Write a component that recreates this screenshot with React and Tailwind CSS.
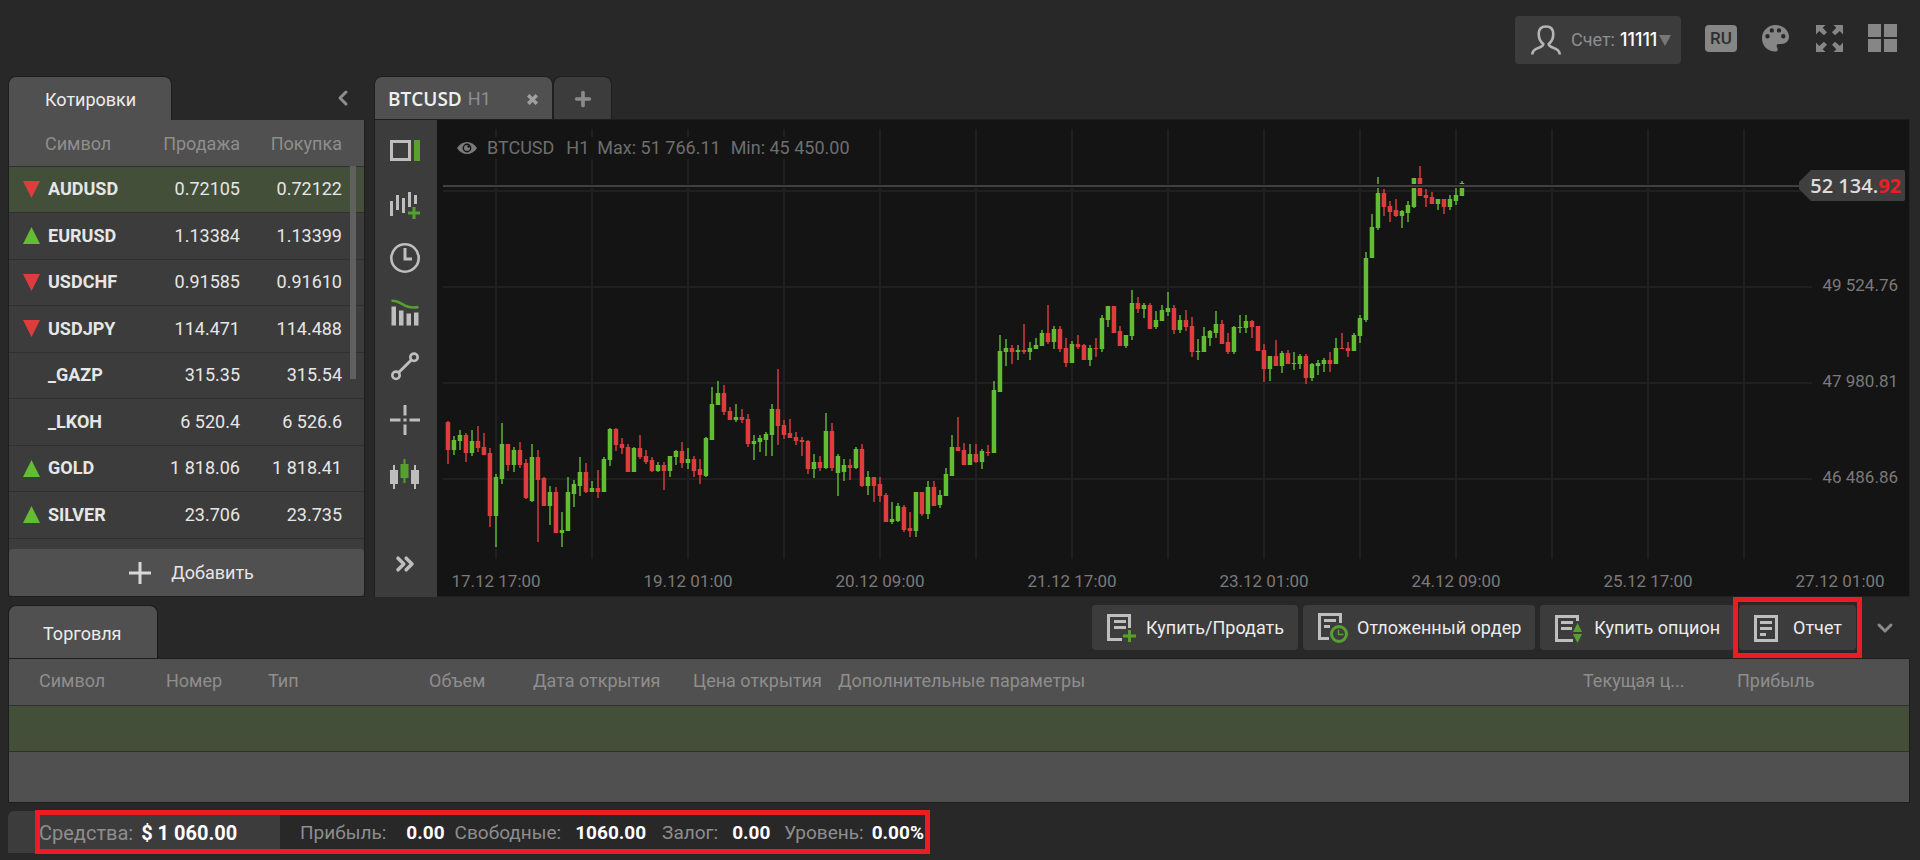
import { ChevronDown, ChevronLeft, ChevronsRight, Plus } from "lucide-react";

const quotes = [
  { symbol: "AUDUSD", bid: "0.72105", ask: "0.72122", trend: "down" },
  { symbol: "EURUSD", bid: "1.13384", ask: "1.13399", trend: "up" },
  { symbol: "USDCHF", bid: "0.91585", ask: "0.91610", trend: "down" },
  { symbol: "USDJPY", bid: "114.471", ask: "114.488", trend: "down" },
  { symbol: "_GAZP", bid: "315.35", ask: "315.54" },
  { symbol: "_LKOH", bid: "6 520.4", ask: "6 526.6" },
  { symbol: "GOLD", bid: "1 818.06", ask: "1 818.41", trend: "up" },
  { symbol: "SILVER", bid: "23.706", ask: "23.735", trend: "up" },
];

// direction, then high / body top / body bottom / low as plot heights
const candles = `
d311,312,340,354 u326,330,340,345 u320,325,331,340 d323,325,343,352 u320,331,343,346
d316,331,338,342 d323,337,345,345 d338,343,406,417 u364,367,406,437 u313,334,369,374
d334,334,355,361 u337,340,355,362 d332,340,355,358 d349,353,388,389 u334,347,391,392
d340,347,370,432 d367,368,396,396 u376,382,396,415 d377,382,423,423 u402,420,423,437
u367,382,421,421 u370,374,384,397 u347,362,376,386 d353,362,382,383 u371,378,382,382
d360,378,382,388 u347,349,382,382 u318,319,350,356 d318,319,335,341 d328,334,338,344
d334,337,362,362 u337,338,362,362 d325,338,347,349 d340,346,352,354 d347,350,361,362
u352,355,361,362 d352,355,361,380 u346,346,361,367 u340,341,347,355 d332,341,353,358
u338,349,353,359 d346,349,361,367 d349,359,365,374 u327,328,366,367 u277,294,330,330
u271,283,295,295 d275,283,302,305 d297,301,310,310 u294,307,310,312 d299,307,310,313
d304,309,334,337 u325,331,334,350 u325,328,332,342 u322,324,330,346 u294,299,325,346
d259,299,316,335 d310,315,325,329 d309,323,328,328 d322,327,331,335 d327,330,332,346
d330,331,359,364 u344,352,359,368 d346,352,358,361 u303,321,358,359 d313,321,358,361
u344,346,363,386 u349,355,362,371 d349,355,358,370 u337,339,358,359 d334,339,376,377
u361,367,376,385 d367,367,376,392 d367,374,386,392 d383,385,412,412 u392,409,412,414
u393,396,411,412 d395,397,420,422 d402,418,421,427 u382,382,421,427 d382,382,404,406
u371,377,404,409 d371,377,396,396 u380,385,395,398 u358,364,386,386 u325,337,366,366
d307,337,341,341 d333,340,355,355 u334,344,355,355 d334,344,352,353 u339,341,352,359
d335,342,343,346 u271,280,343,343 u225,241,282,282 u229,238,242,256 d235,238,242,254
u235,240,242,250 d214,240,242,244 u232,238,242,250 u228,235,239,239 u220,223,236,236
d195,223,232,234 u216,219,232,239 d216,219,239,242 d228,238,253,257 u231,234,253,253
d225,234,237,239 d234,235,250,250 u235,238,250,256 d228,238,239,247 u205,208,239,242
u196,196,210,217 d196,196,223,223 d216,221,236,236 u225,225,236,238 u180,193,226,230
d187,193,199,203 u193,195,199,208 d193,195,219,219 u201,210,217,219 u195,200,211,211
u182,198,202,206 d195,198,220,224 u205,210,220,223 d200,210,217,221 d207,216,242,247
u229,241,242,250 u217,226,242,242 u220,221,228,236 u201,214,223,228 d210,214,234,234
d223,232,242,244 u216,217,242,244 u205,217,218,223 u205,211,218,223 d210,211,217,228
d216,216,241,241 d234,240,259,272 u246,246,259,271 d230,246,256,256 u241,243,256,263
d240,243,254,254 u242,253,254,260 u244,246,254,259 d244,246,268,274 u253,254,268,271
u250,253,256,265 u248,250,254,262 d242,250,254,262 u228,238,254,254 d223,238,239,239
d232,238,241,247 u223,225,241,241 u205,208,226,233 u142,148,210,212 u104,117,148,148
u67,83,118,120 d79,83,97,106 d91,96,102,112 d89,100,106,107 u100,101,106,118
u91,95,103,112 u68,68,97,98 d56,68,86,86 d79,85,88,97 d82,87,94,94
u89,89,94,100 d89,89,97,104 u85,89,97,100 u77,85,91,95 u71,73,86,86
`
  .trim()
  .split(/\s+/)
  .map((item) => {
    const [high, top, bottom, low] = item.slice(1).split(",").map(Number);
    return { up: item[0] === "u", high, top, bottom, low };
  });

const dates = [
  "17.12 17:00",
  "19.12 01:00",
  "20.12 09:00",
  "21.12 17:00",
  "23.12 01:00",
  "24.12 09:00",
  "25.12 17:00",
  "27.12 01:00",
];

const prices = [
  { label: "49 524.76", y: 165 },
  { label: "47 980.81", y: 261 },
  { label: "46 486.86", y: 357 },
];

const tradeColumns = [
  { title: "Символ", width: "w-[157px]" },
  { title: "Номер", width: "w-[102px]" },
  { title: "Тип", width: "w-[161px]" },
  { title: "Объем", width: "w-[104px]" },
  { title: "Дата открытия", width: "w-[160px]" },
  { title: "Цена открытия", width: "w-[145px]" },
  { title: "Дополнительные параметры", width: "" },
  { title: "Текущая ц...", width: "w-[154px]" },
  { title: "Прибыль", width: "w-[172px]" },
];

function TrendIcon({ trend }) {
  if (!trend) return null;
  return (
    <svg width="17" height="17" className={trend === "up" ? "fill-[#62bd32]" : "fill-[#df3d3d]"}>
      <path d={trend === "up" ? "M8.5 0 17 17H0z" : "M0 0h17L8.500 17z"} />
    </svg>
  );
}

function Header() {
  return (
    <header className="flex items-start justify-end pt-4 pr-[23px] pb-3">
      <button className="flex h-12 w-[166px] items-center rounded-sm bg-[#3c3c3c] pl-4 text-lg">
        <svg width="30" height="30" fill="none" stroke="#b4b4b4" strokeWidth="2.600">
          <path d="M1.300 29.500c0-8 11-5.500 11-10.500C6.500 14.500 5 1.500 15 1.500S23.500 14.500 17.700 19c0 5 11 2.500 11 10.500" />
        </svg>
        <span className="ml-2.5 text-[#8e8e8e]">Счет:</span>
        <span className="ml-[5px] font-[Inter,sans-serif] font-medium text-white">11111</span>
        <svg width="12" height="11" className="ml-0.5 fill-[#777]">
          <path d="M0 0h12L6 11z" />
        </svg>
      </button>
      <button className="mt-[9px] ml-6 h-[27px] w-8 rounded-sm bg-[#868686] text-[17px] leading-[27px] font-medium text-[#2e2e2e]">
        RU
      </button>
      <button aria-label="Тема" className="mt-[9px] ml-[25px]">
        <svg width="27" height="27" fill="#868686">
          <path
            fillRule="evenodd"
            d="M13.500 0C21 0 27 5.200 27 11.800 27 16 23.500 19 19.500 19h-2.700c-1.800 0-2.800 1.500-1.800 3.200 1.500 2 .5 4.300-1.700 4.300C5.500 26.500 0 20.500 0 13.200 0 6 6 0 13.500 0zM5.500 9a2.200 2.200 0 1 0 0 4.400 2.200 2.200 0 0 0 0-4.400zM9.800 3.200a2.200 2.200 0 1 0 0 4.400 2.200 2.200 0 0 0 0-4.400zM17 3.200a2.200 2.200 0 1 0 0 4.400 2.200 2.200 0 0 0 0-4.400zM21.300 9a2.200 2.200 0 1 0 0 4.400 2.200 2.200 0 0 0 0-4.400z"
          />
        </svg>
      </button>
      <button aria-label="На весь экран" className="mt-[9px] ml-[27px]">
        <svg width="27" height="27" fill="#868686">
          <path d="M0 0h9.500L6.700 2.800 11 7.200 8 10.200 3.200 6 0 9.500zM27 0v9.500L23.800 6 19 10.200l-3-3 4.300-4.400L17.500 0zM0 27v-9.500L3.200 21 8 16.800l3 3-4.300 4.400L9.500 27zM27 27h-9.500l2.800-2.800L16 19.800l3-3 4.800 4.200 3.200-3.500z" />
        </svg>
      </button>
      <button aria-label="Окна" className="mt-2 ml-[25px]">
        <svg width="29" height="28" fill="#868686">
          <path d="M0 0h13v13H0zM16 0h13v13H16zM0 15h13v13H0zM16 15h13v13H16z" />
        </svg>
      </button>
    </header>
  );
}

function Quotes() {
  return (
    <section className="flex w-[357px] shrink-0 flex-col">
      <div className="flex h-11 items-center justify-between">
        <h2 className="flex h-full w-[164px] items-center rounded-t-lg border border-b-0 border-[#1e1e1e] bg-[#505050] pt-0.5 pl-9 text-lg text-[#ececec]">
          Котировки
        </h2>
        <button aria-label="Свернуть" className="mr-2.5 text-[#8e8e8e]">
          <ChevronLeft className="size-6" strokeWidth={3} />
        </button>
      </div>
      <div className="relative flex grow flex-col border border-t-0 border-[#1e1e1e] bg-[#3c3c3c]">
        <table className="w-full table-fixed text-lg text-[#e6e6e6]">
          <thead>
            <tr className="h-[46px] border-b border-[#303030] bg-[#505050] text-[#8e8e8e]">
              <th className="w-[134px] pt-0.5 pl-9 text-left font-normal">Символ</th>
              <th className="pt-0.5 text-right font-normal">Продажа</th>
              <th className="w-[124px] pt-0.5 pr-[22px] text-right font-normal">Покупка</th>
            </tr>
          </thead>
          <tbody>
            {quotes.map((quote) => (
              <tr
                key={quote.symbol}
                className="h-[46px] border-b border-[#303030] first:bg-[#434f39] even:h-[47px]"
              >
                <td className="font-bold">
                  <div className="flex items-center pl-3.5">
                    <span className="w-[25px]">
                      <TrendIcon trend={quote.trend} />
                    </span>
                    {quote.symbol}
                  </div>
                </td>
                <td className="text-right">{quote.bid}</td>
                <td className="pr-[22px] text-right">{quote.ask}</td>
              </tr>
            ))}
          </tbody>
        </table>
        <div className="absolute top-[46px] right-2 h-[213px] w-1.5 bg-[#606060]" />
        <button className="mt-auto flex h-[47px] items-center justify-center rounded-sm bg-[#505050] pl-2.5 text-lg text-[#e6e6e6]">
          <svg width="22" height="22" className="mr-5 fill-[#d8d8d8]">
            <path d="M9.500 0h3v9.500H22v3h-9.500V22h-3v-9.500H0v-3h9.500z" />
          </svg>
          Добавить
        </button>
      </div>
    </section>
  );
}

const tools = [
  {
    name: "Панель",
    icon: (
      <>
        <path d="M1.500 6.500h18v18h-18z" fill="none" stroke="#bebebe" strokeWidth="3" />
        <path d="M24 5h6v21h-6z" fill="#57a030" />
      </>
    ),
  },
  {
    name: "Добавить график",
    icon: (
      <>
        <path d="M0 12h3v15H0zM6 6h3v15H6zM12 9h3v15h-3zM18 3h3v15h-3zM24 6h3v9h-3z" />
        <path d="M22.500 18h3v4.500H30v3h-4.500V30h-3v-4.500H18v-3h4.500z" fill="#57a030" />
      </>
    ),
  },
  {
    name: "Период",
    icon: (
      <g fill="none" stroke="#bebebe">
        <circle cx="15" cy="15" r="13.700" strokeWidth="2.600" />
        <path d="M15 5v11h7" strokeWidth="3" />
      </g>
    ),
  },
  {
    name: "Индикаторы",
    icon: (
      <>
        <path d="M1.500 9.500H6v19H1.500zM9 13.500h4.500v15H9zM16.500 16.500H21v12h-4.500zM24 15.500h4.500v13H24z" />
        <path d="M1.500 4c9-2 12 9 27 6" fill="none" stroke="#57a030" strokeWidth="2.600" />
      </>
    ),
  },
  {
    name: "Линия",
    icon: (
      <g fill="none" stroke="#bebebe" strokeWidth="2.600">
        <circle cx="24" cy="6.300" r="3.700" />
        <circle cx="6" cy="24.300" r="3.700" />
        <path d="M8.700 21.500 21.300 9" strokeWidth="3" />
      </g>
    ),
  },
  {
    name: "Перекрестие",
    icon: <path d="M13.500 0h3v10.500h-3zM13.500 19.500h3V30h-3zM0 13.500h10.500v3H0zM19.500 13.500H30v3H19.500zM13.500 13.500h3v3h-3z" />,
  },
  {
    name: "Тип графика",
    icon: (
      <>
        <path d="M0 11h3V6h2v5h3v14H5v5H3v-5H0zM21 11h3V6h2v5h3v14h-3v5h-2v-5h-3z" />
        <path d="M10.500 5h3V0h2v5h3v14h-3v5h-2v-5h-3z" fill="#57a030" />
      </>
    ),
  },
];

function Toolbar() {
  return (
    <div className="flex w-[63px] shrink-0 flex-col items-center border-l border-[#1e1e1e] bg-[#3c3c3c] pt-[3px] pr-0.5 pb-1.5">
      {tools.map((tool) => (
        <button key={tool.name} aria-label={tool.name} className="flex h-[54px] items-center">
          <svg width="30" height="30" fill="#bebebe">
            {tool.icon}
          </svg>
        </button>
      ))}
      <button aria-label="Ещё" className="mt-auto flex h-[54px] items-center text-[#bebebe]">
        <ChevronsRight className="size-7" strokeWidth={3} />
      </button>
    </div>
  );
}

function Chart() {
  return (
    <div className="relative min-w-0 grow border-r border-b border-[#222] bg-[#141414]">
      <svg width="100%" height="476" className="block text-[17px]">
        <g fill="#202020">
          {Array.from({ length: 14 }, (_, i) => (
            <rect key={i} x={58 + i * 96} y="9" width="2" height="430" />
          ))}
          {[70, 166, 262, 358].map((y) => (
            <rect key={y} x="6" y={y} width="93%" height="2" />
          ))}
        </g>
        {candles.map((candle, i) => (
          <g key={i} fill={candle.up ? "#62bd32" : "#df3d3d"}>
            <rect
              x={10 + i * 6}
              y={candle.high - 10}
              width="2"
              height={candle.low - candle.high}
              opacity="0.7"
            />
            <rect
              x={8.7 + i * 6}
              y={candle.top - 10}
              width="4.500"
              height={Math.max(candle.bottom - candle.top, 1)}
            />
          </g>
        ))}
        <rect x="6" y="64" width="95%" height="4" fill="#141414" />
        <rect x="6" y="65" width="95%" height="2" fill="#404040" />
        <g fill="#7a7a7a">
          {dates.map((date, i) => (
            <text key={date} x={59 + i * 192} y="467" textAnchor="middle">
              {date}
            </text>
          ))}
        </g>
      </svg>
      {prices.map((price) => (
        <div
          key={price.label}
          className="absolute right-[11px] -translate-y-1/2 text-[17px] leading-5 text-[#7a7a7a]"
          style={{ top: price.y }}
        >
          {price.label}
        </div>
      ))}
      <div className="absolute top-[17px] left-5 flex h-[22px] items-center bg-[#141414] text-lg text-[#6e6e6e]">
        <svg width="20" height="12" className="mr-2.5" fill="#7a7a7a">
          <path
            fillRule="evenodd"
            d="M0 6C5-2 15-2 20 6c-5 8-15 8-20 0zM10 1.600a4.400 4.400 0 1 0 0 8.800 4.400 4.400 0 0 0 0-8.800z"
          />
          <circle cx="10" cy="6" r="3" />
          <circle cx="11.500" cy="4.500" r="1.200" fill="#141414" />
        </svg>
        <span className="mr-3">BTCUSD</span>
        <span className="mr-2">H1</span>
        <span className="mr-2.5">Max: 51 766.11</span>
        <span>Min: 45 450.00</span>
      </div>
      <div className="absolute top-[50px] right-1 h-[31px] w-[106px]">
        <svg width="106" height="31" className="absolute inset-0 fill-[#3f3f3f]">
          <path d="M0 12 12 0h92q2 0 2 2v27q0 2-2 2H12L0 19z" />
        </svg>
        <div className="relative pr-1 text-right font-['Open_Sans',sans-serif] text-xl leading-[31px] font-semibold text-[#dcdcdc]">
          52 134.<span className="font-bold text-[#f01c24]">92</span>
        </div>
      </div>
    </div>
  );
}

function ChartPanel() {
  return (
    <section className="flex min-w-0 grow flex-col">
      <div className="flex h-[43px]">
        <div className="flex w-[179px] items-center rounded-t-lg border border-b-0 border-[#1e1e1e] bg-[#505050] pt-0.5 pl-[13px]">
          <span className="font-['Open_Sans',sans-serif] text-[19px] font-semibold text-[#f0f0f0]">BTCUSD</span>
          <span className="ml-1.5 text-lg text-[#8e8e8e]">H1</span>
          <button aria-label="Закрыть" className="mr-3.5 ml-auto">
            <svg width="11" height="11" fill="none" stroke="#a0a0a0" strokeWidth="3.500">
              <path d="M1.200 1.200l8.600 8.600M9.800 1.200 1.200 9.800" />
            </svg>
          </button>
        </div>
        <button
          aria-label="Новая вкладка"
          className="flex w-[59px] items-center justify-center rounded-t-lg border border-b-0 border-[#1e1e1e] bg-[#3c3c3c] pt-0.5 text-[#8a8a8a]"
        >
          <Plus className="size-[22px]" strokeWidth={4} />
        </button>
      </div>
      <div className="flex grow border-t border-[#1e1e1e]">
        <Toolbar />
        <Chart />
      </div>
    </section>
  );
}

const sheetLines = <path d="M7 7h12v3H7zM7 13h12v3H7z" />;

const actions = [
  {
    title: "Купить/Продать",
    icon: (
      <>
        <path d="M0 1h24v14h-3V4H3v21h12v3H0z" />
        {sheetLines}
        <path d="M21 17h3v4.500h5v3h-5V29h-3v-4.500h-5v-3h5z" fill="#57a030" />
      </>
    ),
  },
  {
    title: "Отложенный ордер",
    icon: (
      <>
        <path d="M0 0h24v10h-3V3H3v21h8v3H0z" />
        <path d="M6 6h12v3H6zM6 12h6v3H6z" />
        <g fill="none" stroke="#57a030">
          <circle cx="21" cy="21" r="7.500" strokeWidth="3" />
          <path d="M20.500 16.500v5h5" strokeWidth="1.500" />
        </g>
      </>
    ),
  },
  {
    title: "Купить опцион",
    icon: (
      <>
        <path d="M0 2h24v6h-3V5H3v21h15v3H0z" />
        <path d="M6 8h12v3H6zM6 14h11v3H6z" />
        <path d="M22.500 10 27 19h-9zM22.500 30 27 21h-9z" fill="#57a030" />
      </>
    ),
  },
  {
    title: "Отчет",
    marked: true,
    icon: (
      <>
        <path fillRule="evenodd" d="M0 2h24v27H0zM3 5v21h18V5z" />
        <path d="M6 8h12v3H6zM6 14h12v3H6zM6 20h6v3H6z" />
      </>
    ),
  },
];

function Trades() {
  return (
    <section>
      <div className="flex h-[53px] items-start justify-between">
        <h2 className="flex h-full w-[150px] items-center rounded-t-lg border border-b-0 border-[#1a1a1a] bg-[#505050] pt-1 pl-[34px] text-lg text-[#ececec]">
          Торговля
        </h2>
        <div className="flex gap-[5px]">
          {actions.map((action) => (
            <div key={action.title} className="relative">
              <button className="flex h-[45px] items-center rounded-sm bg-[#3c3c3c] pr-3.5 pl-[15px] text-lg text-[#ececec]">
                <svg width="31" height="30" className="mr-2" fill="#bebebe">
                  {action.icon}
                </svg>
                {action.title}
              </button>
              {action.marked && (
                <div className="absolute -inset-x-1.5 -top-2 -bottom-2 border-5 border-[#ed1c24]" />
              )}
            </div>
          ))}
          <button aria-label="Свернуть" className="mr-[13px] ml-3 h-[45px] text-[#8a8a8a]">
            <ChevronDown className="size-6" strokeWidth={3} />
          </button>
        </div>
      </div>
      <div className="border border-[#1e1e1e] bg-[#505050] pb-[50px]">
        <table className="w-full table-fixed text-lg text-[#8e8e8e]">
          <thead>
            <tr className="h-[46px] border-b border-[#303030]">
              {tradeColumns.map((column) => (
                <th
                  key={column.title}
                  className={`${column.width} pb-px text-left font-normal whitespace-nowrap first:pl-[30px]`}
                >
                  {column.title}
                </th>
              ))}
            </tr>
          </thead>
          <tbody>
            <tr className="h-[46px] border-b border-[#303030] bg-[#434f39]">
              <td colSpan={9} />
            </tr>
          </tbody>
        </table>
      </div>
    </section>
  );
}

function Balance() {
  return (
    <footer className="flex">
      <div className="relative flex h-[42px] items-center text-[19px] whitespace-nowrap text-[#8e8e8e]">
        <div className="flex h-full w-[272px] items-center rounded-tl-md bg-[#3c3c3c] pt-0.5 pl-[31px] text-xl">
          Средства:
          <b className="ml-2 text-white">$ 1 060.00</b>
        </div>
        <div className="flex items-center pt-1">
          <span className="ml-5">Прибыль:</span>
          <b className="ml-5 text-white">0.00</b>
          <span className="ml-2.5">Свободные:</span>
          <b className="ml-3.5 text-white">1060.00</b>
          <span className="ml-4">Залог:</span>
          <b className="ml-3.5 text-white">0.00</b>
          <span className="ml-3.5">Уровень:</span>
          <b className="ml-2 text-white">0.00%</b>
        </div>
        <div className="absolute -top-px -right-1.5 -bottom-px left-[27px] border-5 border-[#ed1c24]" />
      </div>
    </footer>
  );
}

export default function App() {
  return (
    <div className="min-h-screen bg-[#282828] font-[Roboto,sans-serif]">
      <Header />
      <main className="flex flex-col gap-2 pr-2.5 pl-2">
        <div className="flex gap-[9px]">
          <Quotes />
          <ChartPanel />
        </div>
        <Trades />
        <Balance />
      </main>
    </div>
  );
}
